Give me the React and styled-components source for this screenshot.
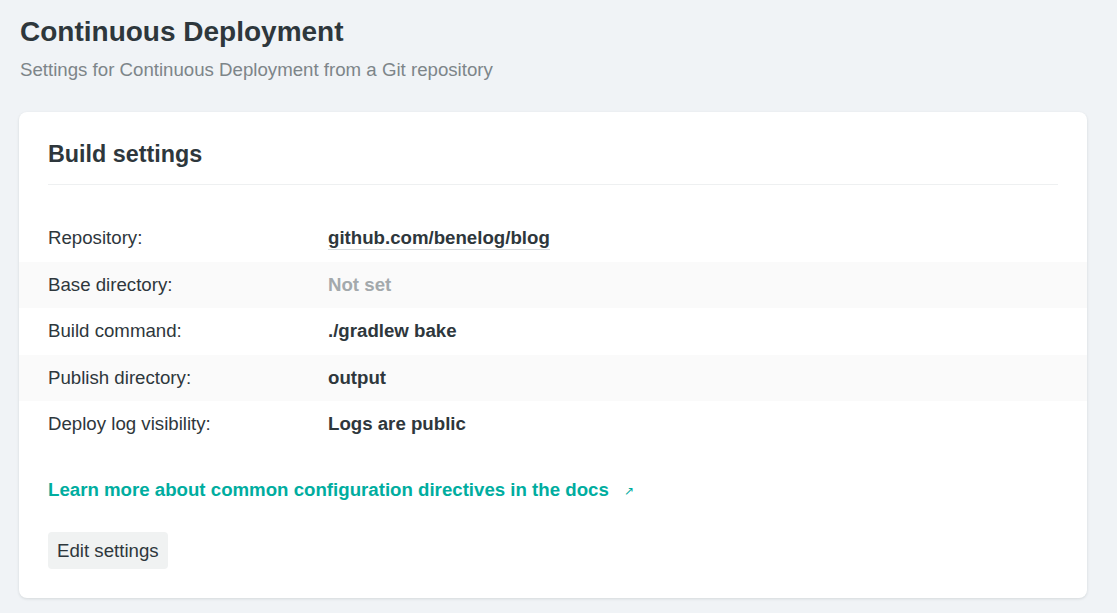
import React from "react";
import styled, { createGlobalStyle } from "styled-components";

const GlobalStyle = createGlobalStyle`
  body {
    margin: 0;
    background: #f0f3f6;
    font-family: "Liberation Sans", Arial, sans-serif;
    color: #2e373c;
  }
`;

const Page = styled.div`
  padding: 16px 30px 15px 19px;
`;

const Title = styled.h1`
  margin: 0 0 0 1px;
  font-size: 28px;
  line-height: 32px;
  font-weight: 700;
  color: #2e373c;
`;

const Subtitle = styled.p`
  margin: 10px 0 0 1px;
  font-size: 18.66px;
  line-height: 24px;
  color: #7d8589;
`;

const Card = styled.section`
  margin-top: 30px;
  background: #fff;
  border-radius: 8px;
  box-shadow: 0 1px 3px rgba(14, 30, 37, 0.12);
  padding: 28px 0 29px;
`;

const CardHeader = styled.div`
  margin: 0 29px;
  padding-bottom: 15px;
  border-bottom: 1px solid #eef0f1;
`;

const CardTitle = styled.h2`
  margin: 0;
  font-size: 23.33px;
  line-height: 29px;
  font-weight: 700;
  color: #2e373c;
`;

const Rows = styled.dl`
  margin: 30px 0 0;
`;

const Row = styled.div`
  display: flex;
  align-items: center;
  height: 46.5px;
  padding: 0 29px;
  background: ${(p) => (p.$striped ? "#fafafa" : "transparent")};
`;

const Label = styled.dt`
  width: 280px;
  font-size: 18.66px;
  color: #2e373c;
`;

const Value = styled.dd`
  margin: 0;
  font-size: 18.66px;
  font-weight: 700;
  color: ${(p) => (p.$muted ? "#a3a9ac" : "#2e373c")};
`;

const RepoLink = styled.a`
  color: inherit;
  text-decoration: none;
  border-bottom: 1px solid #d7dbdd;
  padding-bottom: 1px;
`;

const DocsLink = styled.a`
  display: inline-block;
  margin: 31px 29px 0;
  font-size: 18.66px;
  font-weight: 700;
  color: #00ad9f;
  text-decoration: none;
`;

const ArrowMark = styled.span`
  margin-left: 15px;
  font-size: 12px;
  font-weight: 400;
  vertical-align: 1px;
`;

const ButtonRow = styled.div`
  margin: 31px 29px 0;
`;

const Button = styled.button`
  font-family: "Liberation Sans", Arial, sans-serif;
  font-size: 18.66px;
  color: #2e373c;
  background: #f0f2f2;
  border: none;
  border-radius: 4px;
  padding: 8px 9px;
  line-height: 21px;
`;

const settings = [
  { label: "Repository:", value: "github.com/benelog/blog", link: true },
  { label: "Base directory:", value: "Not set", muted: true },
  { label: "Build command:", value: "./gradlew bake" },
  { label: "Publish directory:", value: "output" },
  { label: "Deploy log visibility:", value: "Logs are public" },
];

const App = () => {
  return (
    <>
      <GlobalStyle />
      <Page>
        <Title>Continuous Deployment</Title>
        <Subtitle>Settings for Continuous Deployment from a Git repository</Subtitle>
        <Card>
          <CardHeader>
            <CardTitle>Build settings</CardTitle>
          </CardHeader>
          <Rows>
            {settings.map((s, i) => (
              <Row key={s.label} $striped={i % 2 === 1}>
                <Label>{s.label}</Label>
                <Value $muted={s.muted}>
                  {s.link ? <RepoLink href="#">{s.value}</RepoLink> : s.value}
                </Value>
              </Row>
            ))}
          </Rows>
          <DocsLink href="#">
            Learn more about common configuration directives in the docs
            <ArrowMark>↗</ArrowMark>
          </DocsLink>
          <ButtonRow>
            <Button>Edit settings</Button>
          </ButtonRow>
        </Card>
      </Page>
    </>
  );
};

export default App;
